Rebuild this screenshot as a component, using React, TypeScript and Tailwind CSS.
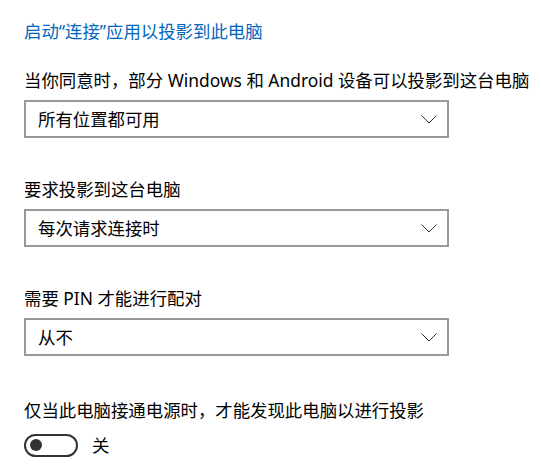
import { useState } from "react";

const font = { fontFamily: '"Noto Sans", "Noto Sans CJK SC", sans-serif' };

type Option = { label: string; value: string };

const Dropdown = ({ value }: { value: string }) => (
  <div className="mt-[8px] flex h-[38px] w-[425px] items-center justify-between border-2 border-[#999999] bg-white pl-[12px] pr-[10px]">
    <span className="text-[17.4px] leading-[24px] text-black">{value}</span>
    <svg width="16" height="9" viewBox="0 0 16 9" fill="none">
      <path d="M0.5 0.5 L8 8 L15.5 0.5" stroke="#333" strokeWidth="1" />
    </svg>
  </div>
);

const Field = ({ label, value, first }: { label: string; value: string; first?: boolean }) => (
  <div className={first ? "mt-[26px]" : "mt-[39px]"}>
    <div className="text-[17.4px] leading-[24px] text-black">{label}</div>
    <Dropdown value={value} />
  </div>
);

export default function App() {
  const [on, setOn] = useState(false);

  const fields: Option[] = [
    { label: "当你同意时，部分 Windows 和 Android 设备可以投影到这台电脑", value: "所有位置都可用" },
    { label: "要求投影到这台电脑", value: "每次请求连接时" },
    { label: "需要 PIN 才能进行配对", value: "从不" },
  ];

  return (
    <div style={font} className="h-[469px] w-[541px] bg-white pl-[24px] pt-[20px]">
      <div className="text-[17.4px] leading-[22px] text-[#0067c0]">启动“连接”应用以投影到此电脑</div>

      {fields.map((f, i) => (
        <Field key={f.label} label={f.label} value={f.value} first={i === 0} />
      ))}

      <div className="mt-[42px] text-[17.4px] leading-[24px] text-black">
        仅当此电脑接通电源时，才能发现此电脑以进行投影
      </div>
      <div className="mt-[11px] flex items-center gap-[14px]">
        <button
          onClick={() => setOn(!on)}
          className={
            on
              ? "flex h-[23px] w-[54px] items-center justify-end rounded-full border-2 border-[#0067c0] bg-[#0067c0] px-[4px]"
              : "flex h-[23px] w-[54px] items-center justify-start rounded-full border-2 border-[#333333] bg-white px-[4px]"
          }
        >
          <span className={on ? "h-[12px] w-[12px] rounded-full bg-white" : "h-[12px] w-[12px] rounded-full bg-[#333333]"} />
        </button>
        <span className="text-[17.4px] leading-[24px] text-black">{on ? "开" : "关"}</span>
      </div>
    </div>
  );
}
